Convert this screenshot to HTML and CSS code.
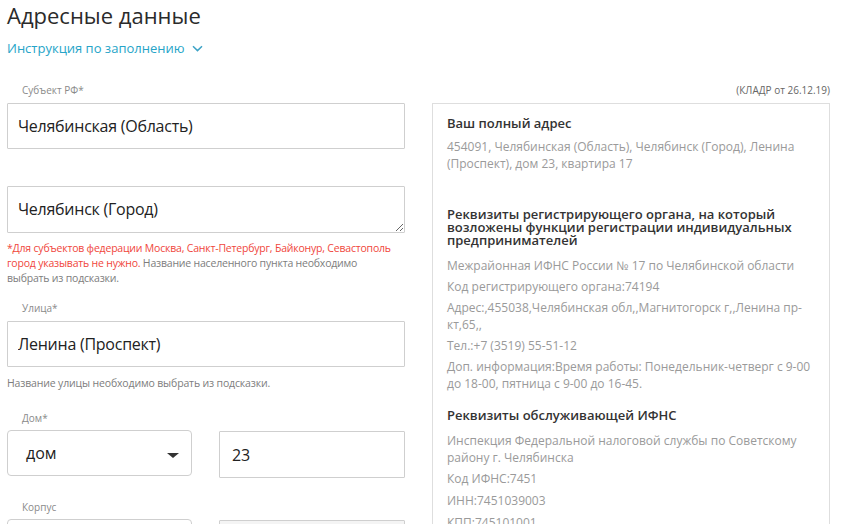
FILE: index.html
```html
<!DOCTYPE html>
<html lang="ru">
<head>
<meta charset="utf-8">
<title>Адресные данные</title>
<link rel="stylesheet" href="styles.css">
</head>
<body>
<div class="page">
  <h1 class="title">Адресные данные</h1>
  <a class="guide" href="#">Инструкция по заполнению <svg class="chev" width="11" height="7" viewBox="0 0 11 7"><path d="M1 1.2 L5.5 5.6 L10 1.2" fill="none" stroke="#3ea3c6" stroke-width="1.5"/></svg></a>

  <div class="columns">
    <div class="form">
      <div class="label">Субъект РФ*</div>
      <input class="field" type="text" value="Челябинская (Область)">

      <div class="label label-empty"></div>
      <textarea class="field area">Челябинск (Город)</textarea>
      <p class="note"><span class="warn">*Для субъектов федерации Москва, Санкт-Петербург, Байконур, Севастополь город указывать не нужно.</span> Название населенного пункта необходимо выбрать из подсказки.</p>

      <div class="label label-street">Улица*</div>
      <input class="field" type="text" value="Ленина (Проспект)">
      <p class="hint">Название улицы необходимо выбрать из подсказки.</p>

      <div class="label label-house">Дом*</div>
      <div class="pair">
        <div class="select"><span>дом</span><i class="caret"></i></div>
        <input class="field half" type="text" value="23">
      </div>

      <div class="label label-korp">Корпус</div>
      <div class="pair">
        <div class="select"><span></span><i class="caret"></i></div>
        <input class="field half disabled" type="text" value="">
      </div>
    </div>

    <div class="side">
      <div class="kladr">(КЛАДР от 26.12.19)</div>
      <div class="panel">
        <section class="sec sec-addr">
          <h3>Ваш полный адрес</h3>
          <p>454091, Челябинская (Область), Челябинск (Город), Ленина (Проспект), дом 23, квартира 17</p>
        </section>
        <section class="sec sec-reg">
          <h3>Реквизиты регистрирующего органа, на который возложены функции регистрации индивидуальных предпринимателей</h3>
          <p>Межрайонная ИФНС России № 17 по Челябинской области</p>
          <p>Код регистрирующего органа:74194</p>
          <p>Адрес:,455038,Челябинская обл,,Магнитогорск г,,Ленина пр-кт,65,,</p>
          <p>Тел.:+7 (3519) 55-51-12</p>
          <p>Доп. информация:Время работы: Понедельник-четверг с 9-00 до 18-00, пятница с 9-00 до 16-45.</p>
        </section>
        <section class="sec">
          <h3>Реквизиты обслуживающей ИФНС</h3>
          <p>Инспекция Федеральной налоговой службы по Советскому району г. Челябинска</p>
          <p>Код ИФНС:7451</p>
          <p>ИНН:7451039003</p>
          <p>КПП:745101001</p>
        </section>
      </div>
    </div>
  </div>
</div>
</body>
</html>
```

FILE: styles.css
```css
html, body {
  margin: 0;
  padding: 0;
  background: #ffffff;
  overflow: hidden;
}
body {
  font-family: "Open Sans", "Noto Sans", sans-serif;
  color: #333333;
}
.page {
  padding-left: 7px;
  width: 823px;
}
.title {
  margin: 0;
  font-size: 22px;
  line-height: 30px;
  font-weight: 400;
  color: #2b2b2b;
}
.guide {
  display: inline-flex;
  align-items: center;
  margin-top: 9px;
  font-size: 13px;
  line-height: 18px;
  color: #26a4c8;
  text-decoration: none;
}
.chev {
  margin-left: 7px;
  margin-top: 1px;
}
.columns {
  display: flex;
  gap: 27px;
  margin-top: 25px;
}
.form {
  width: 398px;
  display: flex;
  flex-direction: column;
}
.side {
  width: 398px;
}
.label {
  font-size: 10px;
  line-height: 14px;
  height: 14px;
  color: #8a8a8a;
  padding-left: 15px;
  margin-bottom: 6px;
}
.label-empty {
  margin-top: 17px;
}
.label-street {
  margin-top: 15px;
}
.label-house {
  margin-top: 20px;
  margin-bottom: 5px;
}
.label-korp {
  margin-top: 22px;
  margin-bottom: 5px;
}
.field {
  box-sizing: border-box;
  width: 398px;
  height: 46px;
  margin: 0;
  border: 1px solid #cfcfcf;
  border-radius: 1px;
  padding: 0 10px;
  font-family: "Open Sans", "Noto Sans", sans-serif;
  font-size: 16px;
  letter-spacing: -0.25px;
  color: #222222;
  background: #ffffff;
  outline: none;
}
.area {
  height: 47px;
  padding-top: 11px;
  line-height: 22px;
  resize: vertical;
  overflow: hidden;
}
.note {
  margin: 8px 0 0;
  padding-right: 6px;
  font-size: 10.5px;
  letter-spacing: -0.2px;
  line-height: 15px;
  color: #7d7d7d;
}
.warn {
  color: #f0463c;
}
.hint {
  margin: 9px 0 0;
  font-size: 10.5px;
  letter-spacing: -0.15px;
  line-height: 15px;
  color: #7d7d7d;
}
.pair {
  display: flex;
  align-items: flex-start;
  gap: 27px;
}
.select {
  box-sizing: border-box;
  width: 185px;
  height: 46px;
  border: 1px solid #cfcfcf;
  border-radius: 4px;
  display: flex;
  align-items: center;
  justify-content: space-between;
  padding: 0 12px 0 18px;
  font-size: 16px;
  color: #222222;
}
.caret {
  width: 0;
  height: 0;
  border-left: 6px solid transparent;
  border-right: 6px solid transparent;
  border-top: 5px solid #333333;
  margin-top: 4px;
}
.half {
  width: 186px;
  height: 47px;
  margin-top: 1px;
  padding-left: 12px;
}
.disabled {
  background: #f4f4f4;
}
.kladr {
  font-size: 10px;
  line-height: 14px;
  height: 14px;
  text-align: right;
  color: #666666;
  margin-bottom: 6px;
}
.panel {
  box-sizing: border-box;
  border: 1px solid #dedede;
  padding: 13px 12px 20px 14px;
  height: 440px;
}
.sec h3 {
  margin: 0 0 10px;
  font-size: 13px;
  line-height: 13px;
  font-weight: 600;
  color: #333333;
}
.sec p {
  margin: 0 0 4px;
  font-size: 12px;
  line-height: 17px;
  color: #9a9a9a;
}
.sec-addr h3 {
  margin-bottom: 8px;
}
.sec-addr {
  margin-bottom: 36px;
}
.sec-reg {
  margin-bottom: 17px;
}
.sec:last-child p:nth-child(3) {
  margin-bottom: 5px;
}
.sec:last-child p:nth-child(4) {
  margin-bottom: 5px;
}
```
